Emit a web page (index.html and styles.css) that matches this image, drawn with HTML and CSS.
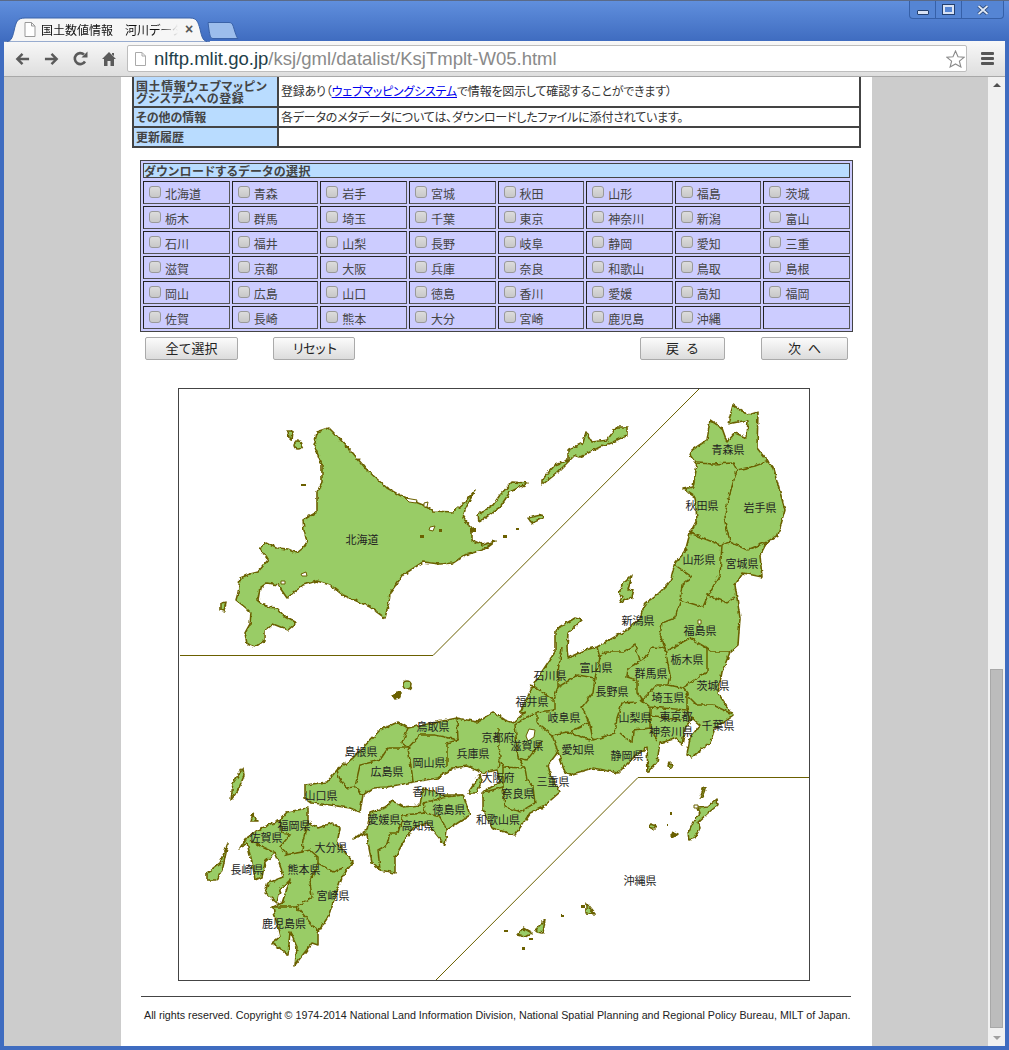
FILE: index.html
```html
<!DOCTYPE html>
<html lang="ja">
<head>
  <meta charset="UTF-8">
  <title>国土数値情報 河川データ</title>
  <link rel="stylesheet" href="styles.css">
</head>
<body>

  <!-- window title bar -->
  <div class="titlebar">
    <div class="tab">
      <svg class="tab-shape" width="206" height="25" viewBox="0 0 206 25">
        <path d="M0 25 C7 25 8 22 10 14 C12 5 13 1 21 1 L186 1 C193 1 194 5 196 12 C198 21 199 25 206 25 Z" fill="#f6f6f6" stroke="#3a62a8"/>
      </svg>
      <svg class="doc-icon" width="12" height="15" viewBox="0 0 12 15"><path d="M1 .5 H7.500 L11 4 V14.500 H1 Z M7.500 .5 V4 H11" fill="#fff" stroke="#999"/></svg>
      <span class="tab-title">国土数値情報　河川データ</span>
      <span class="tab-close">×</span>
    </div>
    <svg class="newtab" width="32" height="17" viewBox="0 0 32 17"><path d="M1 .5 H22 C26 .5 26 4 28 10 C29 13 30 16 31 16.500 H6 C3 16.500 3 13 2 8 Z" fill="#9cbdec" stroke="#3a62a8"/></svg>
    <div class="winctl">
      <div class="winbtn"><span class="ic-min"></span></div>
      <div class="winbtn"><span class="ic-max"></span></div>
      <div class="winbtn winbtn-close">
        <svg width="12" height="10" viewBox="0 0 12 10"><path d="M1.500 1 L10.500 9 M10.500 1 L1.500 9" stroke="#24406f" stroke-width="3.400"/><path d="M1.500 1 L10.500 9 M10.500 1 L1.500 9" stroke="#dfe8f6" stroke-width="1.800"/></svg>
      </div>
    </div>
  </div>

  <!-- toolbar -->
  <div class="toolbar">
    <svg class="nav" width="15" height="14" viewBox="0 0 16 14"><path d="M15 7 H3 M8 1.500 L2.500 7 L8 12.500" fill="none" stroke="#5a5a5a" stroke-width="2.600"/></svg>
    <svg class="nav" width="15" height="14" viewBox="0 0 16 14"><path d="M1 7 H13 M8 1.500 L13.500 7 L8 12.500" fill="none" stroke="#5a5a5a" stroke-width="2.600"/></svg>
    <svg class="nav" width="15" height="15" viewBox="0 0 15 15"><path d="M12 10.500 A5.500 5.500 0 1 1 11 3.500" fill="none" stroke="#5a5a5a" stroke-width="2.600"/><path d="M8.500 6.500 H14.500 V.5 Z" fill="#5a5a5a"/></svg>
    <svg class="nav nav-home" width="14" height="14" viewBox="0 0 14 14"><path d="M7 0 L14 7 H12 V14 H8.500 V9 H5.500 V14 H2 V7 H0 Z M10 1 H12 V4 L10 2.500 Z" fill="#5a5a5a"/></svg>
    <div class="omnibox">
      <svg class="doc-icon-url" width="11" height="14" viewBox="0 0 11 14"><path d="M.5 .5 H7 L10.500 4 V13.500 H.5 Z M7 .5 V4 H10.500" fill="#fff" stroke="#aaa"/></svg>
      <span class="url"><span class="url-host">nlftp.mlit.go.jp</span>/ksj/gml/datalist/KsjTmplt-W05.html</span>
      <svg class="star" width="19" height="18" viewBox="0 0 19 18"><path d="M9.500 1 L12 6.800 L18 7.300 L13.400 11.200 L14.900 17 L9.500 14 L4.100 17 L5.600 11.200 L1 7.300 L7 6.800 Z" fill="#fff" stroke="#8a8a8a" stroke-width="1.100"/></svg>
    </div>
    <div class="menu"><i></i><i></i><i></i></div>
  </div>

  <div class="viewport">
    <div class="page-area">
      <div class="sheet">

        <table class="info">
          <tr class="row-tall">
            <th>国土情報ウェブマッピン<br>グシステムへの登録</th>
            <td>登録あり（<a href="#">ウェブマッピングシステム</a>で情報を図示して確認することができます）</td>
          </tr>
          <tr>
            <th>その他の情報</th>
            <td>各データのメタデータについては、ダウンロードしたファイルに添付されています。</td>
          </tr>
          <tr>
            <th>更新履歴</th>
            <td></td>
          </tr>
        </table>

        <div class="select-box">
          <div class="select-head">ダウンロードするデータの選択</div>
          <div class="pref-grid">
            <label class="pref"><input type="checkbox">北海道</label>
            <label class="pref"><input type="checkbox">青森</label>
            <label class="pref"><input type="checkbox">岩手</label>
            <label class="pref"><input type="checkbox">宮城</label>
            <label class="pref"><input type="checkbox">秋田</label>
            <label class="pref"><input type="checkbox">山形</label>
            <label class="pref"><input type="checkbox">福島</label>
            <label class="pref"><input type="checkbox">茨城</label>
            <label class="pref"><input type="checkbox">栃木</label>
            <label class="pref"><input type="checkbox">群馬</label>
            <label class="pref"><input type="checkbox">埼玉</label>
            <label class="pref"><input type="checkbox">千葉</label>
            <label class="pref"><input type="checkbox">東京</label>
            <label class="pref"><input type="checkbox">神奈川</label>
            <label class="pref"><input type="checkbox">新潟</label>
            <label class="pref"><input type="checkbox">富山</label>
            <label class="pref"><input type="checkbox">石川</label>
            <label class="pref"><input type="checkbox">福井</label>
            <label class="pref"><input type="checkbox">山梨</label>
            <label class="pref"><input type="checkbox">長野</label>
            <label class="pref"><input type="checkbox">岐阜</label>
            <label class="pref"><input type="checkbox">静岡</label>
            <label class="pref"><input type="checkbox">愛知</label>
            <label class="pref"><input type="checkbox">三重</label>
            <label class="pref"><input type="checkbox">滋賀</label>
            <label class="pref"><input type="checkbox">京都</label>
            <label class="pref"><input type="checkbox">大阪</label>
            <label class="pref"><input type="checkbox">兵庫</label>
            <label class="pref"><input type="checkbox">奈良</label>
            <label class="pref"><input type="checkbox">和歌山</label>
            <label class="pref"><input type="checkbox">鳥取</label>
            <label class="pref"><input type="checkbox">島根</label>
            <label class="pref"><input type="checkbox">岡山</label>
            <label class="pref"><input type="checkbox">広島</label>
            <label class="pref"><input type="checkbox">山口</label>
            <label class="pref"><input type="checkbox">徳島</label>
            <label class="pref"><input type="checkbox">香川</label>
            <label class="pref"><input type="checkbox">愛媛</label>
            <label class="pref"><input type="checkbox">高知</label>
            <label class="pref"><input type="checkbox">福岡</label>
            <label class="pref"><input type="checkbox">佐賀</label>
            <label class="pref"><input type="checkbox">長崎</label>
            <label class="pref"><input type="checkbox">熊本</label>
            <label class="pref"><input type="checkbox">大分</label>
            <label class="pref"><input type="checkbox">宮崎</label>
            <label class="pref"><input type="checkbox">鹿児島</label>
            <label class="pref"><input type="checkbox">沖縄</label>
            <div class="pref"></div>
          </div>
        </div>

        <div class="buttons">
          <button class="btn btn-all">全て選択</button>
          <button class="btn btn-reset">リセット</button>
          <button class="btn btn-back">戻 る</button>
          <button class="btn btn-next">次 へ</button>
        </div>

        <!-- map of Japan, coordinates are page pixels -->
        <div class="map">
          <svg width="630" height="591" viewBox="179 389 630 591">
            <defs>
              <filter id="rough" x="179" y="389" width="630" height="591" filterUnits="userSpaceOnUse" primitiveUnits="userSpaceOnUse">
                <feTurbulence type="fractalNoise" baseFrequency="0.22" numOctaves="2" seed="4"/>
                <feDisplacementMap in="SourceGraphic" scale="4" xChannelSelector="R" yChannelSelector="G"/>
              </filter>
            </defs>
            <g class="frame">
              <path d="M180 655.500 H433 L699 389"/>
              <path d="M436 980 L638 777.500 H809"/>
            </g>
            <g class="rough">
            <g class="land">
              <!-- Hokkaido and north islands -->
              <path d="M329 428 L317 432 L316 438 L314 445 L318 455 L322 465 L322 482 L317 492 L317 512 L303 520 L304 530 L307 542 L303 548 L297 553 L288 549 L278 548 L266 542 L260 548 L268 560 L258 572 L250 574 L240 578 L238 593 L236 600 L246 608 L251 613 L250 624 L245 633 L247 644 L255 647 L265 640 L265 631 L273 624 L288 630 L296 623 L285 617 L277 608 L267 607 L258 600 L260 588 L267 583 L278 585 L287 598 L303 585 L317 581 L330 585 L343 595 L370 607 L385 618 L389 602 L390 593 L403 575 L423 562 L440 564 L453 563 L465 555 L483 550 L495 541 L483 545 L472 540 L472 528 L463 518 L465 510 L475 490 L465 502 L453 512 L433 511 L423 505 L403 497 L387 488 L367 470 L352 452 L333 432 Z"/>
              <path d="M288 431 L292 431 L291 440 L289 438 Z"/>
              <circle cx="298" cy="445" r="4"/>
              <path d="M221 603 L226 602 L224 611 L221 610 Z"/>
              <path d="M627 427 L617 427 L607 440 L592 442 L586 432 L583 443 L568 450 L568 460 L555 465 L542 480 L542 485 L557 473 L575 455 L580 457 L600 447 L613 442 L627 435 Z"/>
              <path d="M528 483 L512 482 L500 495 L493 505 L478 515 L479 522 L485 518 L500 507 L510 492 Z"/>
              <path d="M528 518 L542 515 L543 518 L532 523 Z"/>
              <!-- Honshu -->
              <path d="M733 405 L728 424 L748 420 L747 438 L735 433 L727 442 L722 428 L710 420 L707 440 L692 450 L690 455 L697 465 L693 487 L683 489 L695 497 L697 520 L690 533 L685 552 L675 563 L670 582 L657 595 L645 603 L640 618 L627 630 L597 647 L585 650 L568 658 L567 647 L568 633 L582 620 L575 618 L555 630 L555 652 L535 682 L525 702 L520 713 L525 712 L513 723 L505 720 L493 712 L477 722 L457 718 L408 728 L398 722 L380 730 L353 758 L337 770 L327 782 L305 785 L305 798 L312 803 L330 805 L350 808 L360 812 L363 795 L373 788 L387 787 L413 782 L438 778 L453 768 L467 766 L483 773 L497 770 L500 782 L483 792 L483 810 L492 828 L515 835 L530 813 L543 807 L560 792 L550 773 L548 765 L558 752 L565 773 L569 775 L593 768 L618 773 L633 758 L647 747 L648 773 L657 762 L660 743 L677 738 L682 745 L685 728 L692 718 L700 725 L690 738 L687 755 L692 757 L710 743 L715 728 L733 715 L718 693 L722 672 L730 652 L738 645 L740 618 L737 598 L735 585 L743 573 L762 577 L760 555 L767 542 L778 535 L785 510 L780 492 L773 468 L757 448 L758 412 L748 415 Z"/>
              <!-- Shikoku -->
              <path d="M392 800 L403 807 L420 805 L423 788 L443 795 L463 795 L470 815 L447 830 L445 845 L427 823 L413 828 L403 843 L395 857 L395 873 L380 870 L372 863 L368 843 L367 833 L353 839 L367 830 L370 813 L387 807 Z"/>
              <!-- Kyushu -->
              <path d="M308 808 L308 822 L318 828 L332 823 L340 828 L337 843 L353 862 L342 877 L328 917 L318 932 L318 945 L312 943 L295 965 L297 947 L290 932 L288 955 L272 943 L280 937 L273 907 L282 903 L290 880 L280 890 L277 903 L265 893 L268 883 L283 877 L280 865 L275 853 L265 862 L262 877 L255 880 L253 867 L247 843 L240 848 L247 837 L262 828 L280 820 L287 812 Z"/>
              <!-- small islands -->
              <path d="M632 575 L622 585 L619 593 L622 597 L619 603 L632 597 L634 589 L628 590 Z"/>
              <path d="M480 775 L468 793 L477 793 L482 780 Z"/>
              <path d="M243 768 L233 783 L231 800 L238 790 L244 776 Z"/>
              <path d="M228 843 L220 863 L207 873 L207 880 L217 880 L223 867 Z"/>
              <path d="M253 813 L256 819 L258 821 L251 821 Z"/>
              <circle cx="407" cy="685" r="4"/>
              <path class="blob" d="M393 696 L397 692 L401 693 L399 698 L395 699 Z"/>
              <path d="M669 762 L673 766 L671 768 L668 765 Z"/>
              <!-- Okinawa panel -->
              <path d="M717 799 L718 805 L708 813 L698 822 L700 828 L695 838 L689 840 L688 833 L693 822 L700 813 L698 808 L708 807 Z"/>
              <path d="M704 787 L706 787 L702 797 L700 797 Z"/>
              <path d="M650 824 L656 826 L653 829 L649 827 Z"/>
              <path class="blob" d="M673 832 L678 834 L674 837 L671 836 Z"/>
              <path d="M586 903 L595 914 L586 913 Z"/>
              <path d="M545 920 L543 933 L536 932 L538 927 Z"/>
              <path d="M523 928 L532 933 L525 937 L517 935 Z"/>
            </g>
            <g class="borders">
              <path d="M697 463 L713 464 L733 463 L737 470 L755 466 L769 461"/>
              <path d="M737 470 L730 493 L724 518 L730 542"/>
              <path d="M690 533 L720 545 L730 542 L747 550 L767 542"/>
              <path d="M722 545 L720 575 L708 595 L727 603 L735 597"/>
              <path d="M675 565 L692 577 L682 585 L680 600 L703 607 L708 595"/>
              <path d="M680 602 L675 618 L662 623 L660 635 L665 648 L652 647 L643 660 L628 668 L627 677 L637 680 L637 693 L642 700"/>
              <path d="M640 660 L635 645 L623 652 L605 652 L600 658 L597 647"/>
              <path d="M668 650 L690 638 L705 647 L712 652 L730 652"/>
              <path d="M707 648 L707 672 L697 678 L683 688"/>
              <path d="M665 648 L670 675 L668 685 L683 688 L687 693 L687 710 L650 707 L642 700 L657 685 L668 685"/>
              <path d="M685 693 L697 705 L713 705 L730 713"/>
              <path d="M687 708 L690 720"/>
              <path d="M637 702 L622 703 L617 718 L615 733 L593 740 L590 725 L582 707 L593 693 L595 678 L600 658"/>
              <path d="M620 733 L632 743 L633 730 L650 728 L650 707"/>
              <path d="M650 715 L667 718 L682 720"/>
              <path d="M650 728 L657 740"/>
              <path d="M595 678 L578 675 L558 687 L553 700 L535 687 L530 685"/>
              <path d="M562 648 L558 672 L558 687"/>
              <path d="M555 700 L555 710 L537 712 L537 723 L552 735 L558 752"/>
              <path d="M537 712 L527 717 L515 725 L518 758 L525 768 L527 780 L533 787 L535 803"/>
              <path d="M552 735 L567 732 L590 740"/>
              <path d="M590 722 L568 733"/>
              <path d="M543 740 L527 760 L518 758"/>
              <path d="M535 803 L520 812 L505 807 L503 787 L485 792"/>
              <path d="M503 767 L503 787"/>
              <path d="M503 767 L525 768"/>
              <path d="M498 728 L498 737 L500 757 L498 770"/>
              <path d="M498 757 L503 767"/>
              <path d="M457 718 L458 740 L447 743 L447 767"/>
              <path d="M458 740 L435 735 L420 735 L408 748 L412 773 L413 782"/>
              <path d="M408 728 L402 743 L408 748 L388 748 L380 760 L360 765 L355 787 L363 795"/>
              <path d="M337 770 L340 780 L347 788 L355 787"/>
              <path d="M423 803 L447 797 L463 795"/>
              <path d="M423 803 L425 813 L403 815 L398 833 L390 833 L387 845 L378 850 L380 870"/>
              <path d="M425 813 L440 817 L447 830"/>
              <path d="M308 822 L303 840 L302 852 L285 855 L287 853 L280 847 L290 835 L282 833 L280 820"/>
              <path d="M302 852 L310 850 L318 857 L318 863 L333 872 L343 868"/>
              <path d="M318 863 L310 882 L312 897 L297 907 L273 907"/>
              <path d="M297 907 L318 932"/>
              <path d="M250 840 L260 846 L275 853"/>
            </g>
            </g>
            <!-- lakes and tiny rocks, too small to roughen -->
            <g class="lakes">
              <path d="M529 729 L535 730 L534 737 L528 741 L526 736 Z"/>
              <path d="M698 620 L701 620 L701 624 L698 624 Z"/>
              <path d="M405 498 L417 500 L416 503 L409 502 Z"/>
              <path d="M424 503 L428 502 L427 507 L424 507 Z"/>
              <path d="M430 527 L435 526 L433 531 L429 530 Z"/>
              <path d="M301 574 L306 572 L307 576 L302 576 Z"/>
              <path d="M281 581 L285 581 L285 584 L281 584 Z"/>
              <path d="M694 805 L698 805 L698 808 L694 808 Z"/>
            </g>
            <g class="rocks">
              <rect x="420" y="535" width="4" height="3"/>
              <rect x="439" y="529" width="3" height="3"/>
              <rect x="470" y="528" width="6" height="4"/>
              <rect x="301" y="484" width="5" height="2"/>
              <rect x="345" y="446" width="4" height="2"/>
              <rect x="670" y="812" width="2" height="3"/>
              <rect x="667" y="824" width="1" height="2"/>
              <rect x="504" y="930" width="4" height="2"/>
              <rect x="522" y="947" width="3" height="3"/>
              <rect x="529" y="938" width="4" height="2"/>
              <rect x="561" y="914" width="1" height="3"/>
              <rect x="561" y="915" width="3" height="2"/>
              <rect x="581" y="905" width="4" height="3"/>
              <rect x="516" y="528" width="3" height="2"/>
              <rect x="503" y="535" width="4" height="3"/>
            </g>
            <g class="labels">
              <text x="362" y="544">北海道</text>
              <text x="728" y="454">青森県</text>
              <text x="702" y="510">秋田県</text>
              <text x="760" y="512">岩手県</text>
              <text x="699" y="564">山形県</text>
              <text x="742" y="568">宮城県</text>
              <text x="638" y="625">新潟県</text>
              <text x="700" y="635">福島県</text>
              <text x="687" y="664">栃木県</text>
              <text x="713" y="690">茨城県</text>
              <text x="596" y="672">富山県</text>
              <text x="550" y="680">石川県</text>
              <text x="651" y="678">群馬県</text>
              <text x="612" y="696">長野県</text>
              <text x="668" y="702">埼玉県</text>
              <text x="532" y="706">福井県</text>
              <text x="564" y="722">岐阜県</text>
              <text x="635" y="722">山梨県</text>
              <text x="676" y="721">東京都</text>
              <text x="718" y="730">千葉県</text>
              <text x="671" y="736">神奈川県</text>
              <text x="578" y="754">愛知県</text>
              <text x="627" y="760">静岡県</text>
              <text x="527" y="750">滋賀県</text>
              <text x="498" y="742">京都府</text>
              <text x="433" y="731">鳥取県</text>
              <text x="361" y="756">島根県</text>
              <text x="387" y="776">広島県</text>
              <text x="429" y="767">岡山県</text>
              <text x="473" y="758">兵庫県</text>
              <text x="498" y="782">大阪府</text>
              <text x="553" y="786">三重県</text>
              <text x="518" y="798">奈良県</text>
              <text x="429" y="796">香川県</text>
              <text x="321" y="800">山口県</text>
              <text x="449" y="814">徳島県</text>
              <text x="384" y="824">愛媛県</text>
              <text x="418" y="830">高知県</text>
              <text x="498" y="824">和歌山県</text>
              <text x="294" y="830">福岡県</text>
              <text x="266" y="842">佐賀県</text>
              <text x="331" y="852">大分県</text>
              <text x="247" y="874">長崎県</text>
              <text x="304" y="874">熊本県</text>
              <text x="333" y="900">宮崎県</text>
              <text x="284" y="928">鹿児島県</text>
              <text x="640" y="885">沖縄県</text>
            </g>
          </svg>
        </div>

        <hr class="rule">
        <p class="copyright">All rights reserved. Copyright © 1974-2014 National Land Information Division, National Spatial Planning and Regional Policy Bureau, MILT of Japan.</p>

      </div>
    </div>
    <div class="scrollbar">
      <span class="arrow-up"></span>
      <div class="thumb"></div>
      <span class="arrow-down"></span>
    </div>
  </div>

</body>
</html>
```

FILE: styles.css
```css
html, body {
  margin: 0;
  height: 1050px;
  overflow: hidden;
}

body {
  background: #3f6cc0;
  font-family: "Noto Sans CJK JP", "Liberation Sans", sans-serif;
  font-size: 12px;
  font-feature-settings: "palt";
  color: #333;
}

/* title bar */
.titlebar {
  height: 41px;
  display: flex;
  align-items: flex-start;
  background: linear-gradient(#608fdd, #3f6cc0);
  padding-left: 4px;
  border-top: 1px solid #5a6a88;
  box-sizing: border-box;
}

.tab {
  position: relative;
  width: 203px;
  height: 24px;
  margin-top: 16px;
  display: flex;
  align-items: center;
  padding-left: 20px;
  box-sizing: border-box;
}

.tab-shape {
  position: absolute;
  left: 0;
  top: 0;
}

.doc-icon {
  position: relative;
  flex: none;
  margin-right: 5px;
}

.tab-title {
  position: relative;
  width: 137px;
  flex: none;
  overflow: hidden;
  white-space: nowrap;
  color: #111;
  font-size: 12px;
  -webkit-mask-image: linear-gradient(90deg, #000 85%, transparent);
  mask-image: linear-gradient(90deg, #000 85%, transparent);
}

.tab-close {
  position: relative;
  margin-left: 7px;
  font: bold 14px "Liberation Sans", sans-serif;
  color: #555;
}

.newtab {
  margin-top: 21px;
  margin-left: 0;
}

.winctl {
  margin-left: auto;
  margin-right: 5px;
  display: flex;
  height: 17px;
  border: 1px solid #3660a8;
  border-top: 0;
  border-radius: 0 0 4px 4px;
  background: #5585d4;
}

.winbtn {
  width: 25px;
  display: flex;
  align-items: center;
  justify-content: center;
  border-right: 1px solid #3660a8;
}

.winbtn-close {
  width: 41px;
  border-right: 0;
}

.ic-min {
  width: 10px;
  height: 3px;
  margin-top: 5px;
  background: #d8e2f4;
  border: 1px solid #24406f;
  border-radius: 1px;
}

.ic-max {
  width: 7px;
  height: 5px;
  border: 2px solid #d8e2f4;
  outline: 1px solid #24406f;
}

/* toolbar */
.toolbar {
  height: 36px;
  margin: 0 4px;
  display: flex;
  align-items: center;
  background: linear-gradient(#f8f8f8, #dedede);
  border-bottom: 1px solid #a8a8a8;
  box-sizing: border-box;
  padding-left: 11px;
}

.nav {
  flex: none;
  margin-right: 14px;
}

.nav-home {
  margin-right: 11px;
}

.omnibox {
  width: 840px;
  height: 27px;
  flex: none;
  display: flex;
  align-items: center;
  padding-left: 7px;
  box-sizing: border-box;
  background: #fff;
  border: 1px solid #bdbdbd;
  border-radius: 2px;
}

.doc-icon-url {
  flex: none;
  margin-right: 8px;
}

.url {
  font: 18.550px "Liberation Sans", sans-serif;
  color: #8a8a8a;
  white-space: nowrap;
}

.url-host {
  color: #1f3f4a;
}

.star {
  margin-left: auto;
  margin-right: 1px;
}

.menu {
  margin-left: 14px;
  width: 13px;
  display: flex;
  flex-direction: column;
  gap: 2px;
}

.menu i {
  display: block;
  height: 3px;
  background: #555;
  border-radius: 1px;
}

/* page */
.viewport {
  height: 969px;
  margin: 0 4px;
  display: flex;
}

.page-area {
  flex: 1;
  background: #cccccc;
  overflow: hidden;
}

.sheet {
  width: 751px;
  height: 969px;
  margin-left: 117px;
  background: #fff;
  overflow: hidden;
}

.info {
  width: 729px;
  margin: -3px 0 0 11px;
  border-collapse: collapse;
  table-layout: fixed;
}

.info th, .info td {
  border: 2px solid #444;
  height: 18px;
  padding: 0 2px;
  line-height: 12px;
  text-align: left;
  font-size: 12px;
}

.info td {
  letter-spacing: -0.2px;
}

.info th {
  width: 139px;
  background: #b9dcff;
  color: #444;
}

.info .row-tall th, .info .row-tall td {
  height: 28px;
}

.info .row-tall th {
  padding-top: 2px;
  letter-spacing: 0.6px;
}

.info a {
  color: #0000ee;
}

.select-box {
  width: 713px;
  margin: 12px 0 0 19px;
  padding: 2px;
  border: 1px solid #444;
  background: #ccccff;
  box-sizing: border-box;
}

.select-head {
  height: 15px;
  line-height: 13px;
  box-sizing: border-box;
  background: #b9dcff;
  border: 1px solid #444;
  font-weight: bold;
  letter-spacing: 0.5px;
  color: #444;
  margin-bottom: 3px;
}

.pref-grid {
  display: grid;
  grid-template-columns: repeat(8, 1fr);
  grid-auto-rows: 23px;
  gap: 2px;
}

.pref {
  display: flex;
  align-items: center;
  box-sizing: border-box;
  padding: 2px 0 0 5px;
  border: 1px solid #555;
  border-top-color: #222;
  border-left-color: #222;
  white-space: nowrap;
  color: #444;
}

.pref input {
  appearance: none;
  width: 12px;
  height: 12px;
  margin: -4px 4px 0 0;
  background: linear-gradient(#dcdcdc, #c8c8c8);
  border: 1px solid #999;
  border-radius: 3px;
  flex: none;
}

.buttons {
  display: flex;
  width: 703px;
  margin: 5px 0 0 24px;
}

.btn {
  height: 23px;
  padding: 0 0 2px;
  font-family: inherit;
  font-size: 13px;
  color: #222;
  background: linear-gradient(#fbfbfb, #dcdcdc);
  border: 1px solid #aaa;
  border-radius: 2px;
  word-spacing: 4px;
}

.btn-all { width: 93px; }
.btn-reset { width: 82px; margin-left: 35px; letter-spacing: -2px; }
.btn-back { width: 85px; margin-left: auto; }
.btn-next { width: 87px; margin-left: 36px; }

.map {
  width: 632px;
  height: 593px;
  margin: 28px 0 0 57px;
  border: 1px solid #444;
  box-sizing: border-box;
}

.map svg {
  display: block;
}

.frame path {
  fill: none;
  stroke: #6b6000;
  stroke-width: 1;
}

.rough {
  filter: url(#rough);
}

.land path, .land circle {
  fill: #99cc66;
  stroke: #6b6000;
  stroke-width: 1.600;
  stroke-linejoin: round;
}

.land .blob {
  fill: #6b6000;
}

.borders path {
  fill: none;
  stroke: #6b6000;
  stroke-width: 1.500;
}

.lakes path {
  fill: #fff;
  stroke: #6b6000;
  stroke-width: 1;
}

.rocks rect {
  fill: #6b6000;
}

.labels text {
  font-size: 11px;
  text-anchor: middle;
  fill: #222;
}

.rule {
  width: 710px;
  height: 1px;
  margin: 15px 0 0 20px;
  border: 0;
  background: #444;
}

.copyright {
  margin: 12px 0 0 23px;
  font: 10.720px "Liberation Sans", sans-serif;
  color: #222;
  white-space: nowrap;
}

/* scrollbar */
.scrollbar {
  width: 17px;
  flex: none;
  display: flex;
  flex-direction: column;
  align-items: center;
  background: #f1f1f1;
}

.arrow-up {
  margin-top: 6px;
  border: 4px solid transparent;
  border-top: 0;
  border-bottom: 4px solid #505050;
}

.thumb {
  width: 13px;
  height: 359px;
  margin-top: auto;
  background: #bcbcbc;
  border: 1px solid #a8a8a8;
  box-sizing: border-box;
}

.arrow-down {
  margin: 8px 0 6px;
  border: 4px solid transparent;
  border-bottom: 0;
  border-top: 4px solid #a0a0a0;
}
```
